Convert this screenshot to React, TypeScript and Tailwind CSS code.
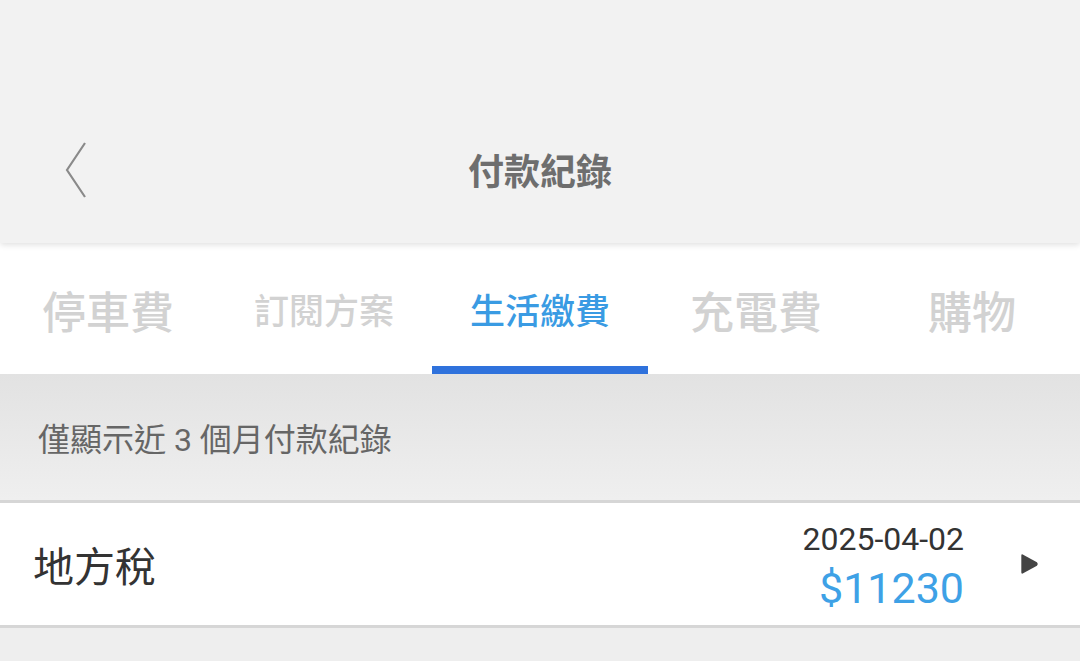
import React from "react";

const tabs = [
  { label: "停車費", size: "text-[44px]", active: false },
  { label: "訂閱方案", size: "text-[35px]", active: false },
  { label: "生活繳費", size: "text-[35px]", active: true },
  { label: "充電費", size: "text-[44px]", active: false },
  { label: "購物", size: "text-[44px]", active: false },
];

export default function App() {
  return (
    <main className="flex min-h-[661px] w-full flex-col bg-[#eeeeee] font-['Roboto','Noto_Sans_CJK_TC',sans-serif]">
      {/* Header */}
      <header className="relative z-10 flex h-[243px] items-end bg-[#f2f2f2] shadow-[0_2px_6px_rgba(0,0,0,0.12)]">
        <div className="relative flex h-[140px] w-full items-center justify-center">
          <button className="absolute left-[57px] top-[34px] p-1">
            <svg width="30" height="58" viewBox="0 0 30 58" fill="none">
              <path d="M24 2 L6 29 L24 56" stroke="#8a8a8a" strokeWidth="2.2" />
            </svg>
          </button>
          <h1 className="text-[36px] font-bold text-[#6e6e6e]">付款紀錄</h1>
        </div>
      </header>

      {/* Tabs */}
      <nav className="grid h-[131px] grid-cols-5 bg-white">
        {tabs.map((t) => (
          <div key={t.label} className="flex flex-col">
            <div className="flex flex-1 items-center justify-center pt-[18px]">
              <span
                className={`${t.size} font-medium ${
                  t.active ? "text-[#3a9be3]" : "text-[#d2d2d2]"
                }`}
              >
                {t.label}
              </span>
            </div>
            <div className={`h-[8px] ${t.active ? "bg-[#2f72dc]" : "bg-transparent"}`}></div>
          </div>
        ))}
      </nav>

      {/* Notice */}
      <div className="flex h-[126px] items-center bg-gradient-to-b from-[#e2e2e2] to-[#efefef] px-[38px] pt-[6px]">
        <p className="text-[32px] text-[#666666]">僅顯示近 3 個月付款紀錄</p>
      </div>

      {/* Record row */}
      <div className="flex h-[128px] items-center border-y-[3px] border-[#d6d6d6] bg-white pl-[33px] pr-[40px]">
        <span className="flex-1 pt-[10px] text-[41px] text-[#333333]">地方稅</span>
        <div className="flex flex-col items-end pt-[4px] leading-none">
          <span className="text-[32px] text-[#333333]">2025-04-02</span>
          <span className="mt-[12px] text-[43px] text-[#3ea1e6]">$11230</span>
        </div>
        <svg className="ml-[54px]" width="22" height="22" viewBox="0 0 20 20">
          <path d="M3 2.5 Q3 0.6 4.7 1.5 L17.2 8.5 Q18.8 10 17.2 11.5 L4.7 18.5 Q3 19.4 3 17.5 Z" fill="#444444" />
        </svg>
      </div>
    </main>
  );
}
